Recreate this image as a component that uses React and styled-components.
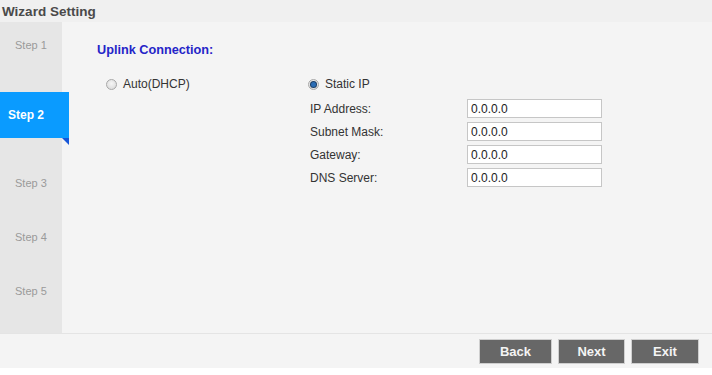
import React from "react";
import styled, { createGlobalStyle } from "styled-components";

const Global = createGlobalStyle`
  html, body { margin: 0; padding: 0; background: #ffffff; }
  body { font-family: "Liberation Sans", Arial, sans-serif; }
`;

const Page = styled.div`
  width: 712px;
  height: 375px;
  display: flex;
  flex-direction: column;
  background: #ffffff;
  overflow: hidden;
`;

const TitleBar = styled.div`
  height: 22px;
  flex: none;
  background: #f0f0f0;
  display: flex;
  align-items: center;
  padding-left: 2px;
  font-size: 13.5px;
  font-weight: bold;
  color: #4a4a4a;
`;

const Body = styled.div`
  display: flex;
  height: 311px;
  flex: none;
  background: #f4f4f4;
`;

const Sidebar = styled.div`
  width: 62px;
  flex: none;
  background: #e6e6e6;
  display: flex;
  flex-direction: column;
  position: relative;
  z-index: 1;
`;

const StepItem = styled.div`
  margin-top: ${(p) => p.$gap}px;
  height: 18px;
  display: flex;
  align-items: center;
  padding-left: 15px;
  font-size: 11px;
  color: #9a9a9a;
`;

const ActiveStep = styled.div`
  margin-top: ${(p) => p.$gap}px;
  width: 69px;
  height: 46px;
  box-sizing: border-box;
  background: #0a9bff;
  display: flex;
  align-items: center;
  padding-left: 8px;
  font-size: 12px;
  font-weight: bold;
  color: #ffffff;
  position: relative;
  &::after {
    content: "";
    position: absolute;
    right: 0;
    bottom: -7px;
    width: 0;
    height: 0;
    border-top: 7px solid #1656d8;
    border-left: 7px solid transparent;
  }
`;

const Main = styled.div`
  flex: 1;
  padding: 20px 0 0 35px;
  display: flex;
  flex-direction: column;
`;

const Heading = styled.div`
  font-size: 12.7px;
  font-weight: bold;
  color: #2424c8;
  height: 16px;
  line-height: 16px;
`;

const Options = styled.div`
  display: flex;
  margin-top: 18px;
  padding-left: 9px;
`;

const LeftCol = styled.div`
  width: 202px;
  flex: none;
`;

const RightCol = styled.div`
  display: flex;
  flex-direction: column;
`;

const RadioRow = styled.label`
  display: flex;
  align-items: center;
  height: 16px;
  gap: 6px;
  font-size: 12px;
  color: #333333;
`;

const Radio = styled.span`
  width: 11px;
  height: 11px;
  box-sizing: border-box;
  border-radius: 50%;
  border: 1px solid #a8a8a8;
  background: radial-gradient(circle at 50% 40%, #f6f6f6 0%, #dcdcdc 80%);
  display: flex;
  align-items: center;
  justify-content: center;
  flex: none;
  &::after {
    content: "";
    width: 5px;
    height: 5px;
    border-radius: 50%;
    background: ${(p) => (p.$checked ? "#2b6db5" : "transparent")};
    box-shadow: ${(p) => (p.$checked ? "0 0 0 1px #1d3f66" : "none")};
  }
`;

const Form = styled.div`
  display: grid;
  grid-template-columns: 157px 135px;
  row-gap: 4px;
  margin-top: 7px;
  padding-left: 2px;
`;

const FieldLabel = styled.div`
  font-size: 12px;
  color: #333333;
  height: 19px;
  display: flex;
  align-items: center;
`;

const Input = styled.input`
  width: 135px;
  height: 19px;
  box-sizing: border-box;
  border: 1px solid #c6c6c6;
  background: #ffffff;
  font-family: "Liberation Sans", Arial, sans-serif;
  font-size: 12px;
  color: #222222;
  padding: 0 3px;
  margin: 0;
  outline: none;
`;

const Footer = styled.div`
  height: 34px;
  flex: none;
  border-top: 1px solid #e4e4e4;
  background: #f4f4f4;
  display: flex;
  justify-content: flex-end;
  align-items: center;
  gap: 6px;
  padding-right: 13px;
`;

const Button = styled.button`
  width: ${(p) => p.$w}px;
  height: 25px;
  box-sizing: border-box;
  border: 1px solid #cfcfcf;
  background: #676767;
  color: #f4f4f4;
  font-family: "Liberation Sans", Arial, sans-serif;
  font-size: 13px;
  font-weight: bold;
  padding: 0;
  cursor: pointer;
`;

const fields = ["IP Address:", "Subnet Mask:", "Gateway:", "DNS Server:"];

export default function App() {
  return (
    <Page>
      <Global />
      <TitleBar>Wizard Setting</TitleBar>
      <Body>
        <Sidebar>
          <StepItem $gap={14}>Step 1</StepItem>
          <ActiveStep $gap={38}>Step 2</ActiveStep>
          <StepItem $gap={36}>Step 3</StepItem>
          <StepItem $gap={36}>Step 4</StepItem>
          <StepItem $gap={36}>Step 5</StepItem>
        </Sidebar>
        <Main>
          <Heading>Uplink Connection:</Heading>
          <Options>
            <LeftCol>
              <RadioRow>
                <Radio />
                Auto(DHCP)
              </RadioRow>
            </LeftCol>
            <RightCol>
              <RadioRow>
                <Radio $checked />
                Static IP
              </RadioRow>
              <Form>
                {fields.map((f) => (
                  <React.Fragment key={f}>
                    <FieldLabel>{f}</FieldLabel>
                    <Input defaultValue="0.0.0.0" />
                  </React.Fragment>
                ))}
              </Form>
            </RightCol>
          </Options>
        </Main>
      </Body>
      <Footer>
        <Button $w={73}>Back</Button>
        <Button $w={67}>Next</Button>
        <Button $w={68}>Exit</Button>
      </Footer>
    </Page>
  );
}
